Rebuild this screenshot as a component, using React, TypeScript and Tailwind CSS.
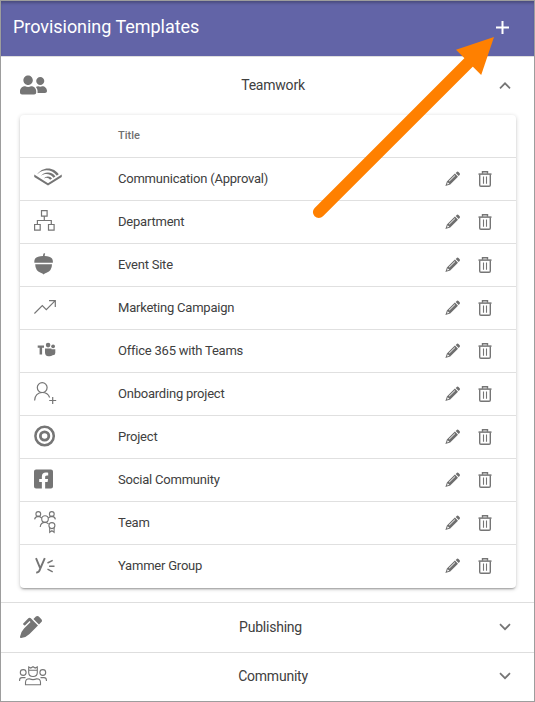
import type { ReactNode } from 'react';
import { FaAudible, FaFacebookSquare, FaPenAlt, FaUserFriends } from 'react-icons/fa';

function Glyph({ children }: { children: ReactNode }) {
  return (
    <svg width="28" height="24" viewBox="0 0 28 24" fill="none" stroke="#757575" strokeWidth="1.2">
      {children}
    </svg>
  );
}

const departmentIcon = (
  <Glyph>
    <path d="M7.5 .6h5.6v5.6H7.5zM.6 14.5h5.6v5.6H.6zM14.5 14.5h5.6v5.6h-5.6zM10.3 6.2v4.500M3.400 14.500v-4h13.900v4" />
  </Glyph>
);

const acornIcon = (
  <Glyph>
    <path
      d="M9 3Q9 1 10 0L11.2.8Q10.6 2 10.7 3Q16 3.200 18 5.500Q19.200 7.500 18.800 9.800H.4Q0 7.500 1.200 5.500Q3.200 3.200 9 3ZM1.200 11.200H18Q18 17.500 12.500 19.800Q10.500 20.600 9.600 21.400Q8.700 20.600 6.700 19.800Q1.200 17.500 1.200 11.200Z"
      fill="#757575"
      stroke="none"
    />
  </Glyph>
);

const campaignIcon = (
  <Glyph>
    <path d="M.4 17.500 8.300 9.600 12.300 13.600 21.200 4.700M15 4.600H21.300V11" />
  </Glyph>
);

const teamsIcon = (
  <Glyph>
    <g fill="#757575" stroke="none">
      <path d="M3.700 6.400H10V8.700H8.100V15.500H5.600V8.700H3.700ZM11 9.500H17.500V10.300H21.300V14Q21.300 16.300 18.500 16.200Q17 17.500 14.500 17.200Q11 17 11 13.500Z" />
      <circle cx="14.100" cy="6.100" r="2.300" />
      <circle cx="19.100" cy="7.300" r="1.900" />
    </g>
  </Glyph>
);

const onboardingIcon = (
  <Glyph>
    <circle cx="8.200" cy="5.600" r="4.900" />
    <path d="M.6 18.500C.6 13.500 4 10.500 8.200 10.500C12 10.500 14.600 12.500 15.600 15.500M18.700 15V22M15.200 18.500H22.200" />
  </Glyph>
);

const projectIcon = (
  <Glyph>
    <circle cx="10.600" cy="11" r="9.200" strokeWidth="2.500" />
    <circle cx="10.600" cy="11" r="4.200" strokeWidth="2.800" />
  </Glyph>
);

const teamIcon = (
  <Glyph>
    <g strokeWidth="1.100">
      <circle cx="4.300" cy="3" r="2.400" />
      <circle cx="17.800" cy="3" r="2.400" />
      <circle cx="11" cy="8" r="3.300" />
      <path d="M.6 8.300Q1 5.500 4.300 5.400Q6.400 5.500 7.800 7.100M14.200 7.100Q15.600 5.500 17.800 5.400Q21 5.500 21.400 8.300M6.200 16Q6.800 11.400 11 11.400Q13 11.400 14.500 12.800" />
      <circle cx="17.900" cy="14.600" r="3" />
      <path d="M15.700 16.700V21.300L17.900 19.600L20.100 21.300V16.700" />
    </g>
  </Glyph>
);

const yammerIcon = (
  <Glyph>
    <path d="M2 4.200 6.300 14.500 10.800 4.200M6.300 14.500Q5 19 2.200 18.400" strokeWidth="1.900" />
    <path d="M13.500 9 18.700 6.400M15.100 12.200H20.500M13.500 15.200 18.700 17.800" strokeWidth="1.500" />
  </Glyph>
);

const templates: { title: string; icon: ReactNode }[] = [
  { title: 'Communication (Approval)', icon: <FaAudible className="mb-1 h-[22px] w-7" /> },
  { title: 'Department', icon: departmentIcon },
  { title: 'Event Site', icon: acornIcon },
  { title: 'Marketing Campaign', icon: campaignIcon },
  { title: 'Office 365 with Teams', icon: teamsIcon },
  { title: 'Onboarding project', icon: onboardingIcon },
  { title: 'Project', icon: projectIcon },
  { title: 'Social Community', icon: <FaFacebookSquare className="mb-[2px] h-[22px] w-[19px]" /> },
  { title: 'Team', icon: teamIcon },
  { title: 'Yammer Group', icon: yammerIcon },
];

function PencilIcon() {
  return (
    <svg width="16" height="16" viewBox="0 0 16 16" fill="#6e6e6e">
      <path d="M10.700 1.900 12 .8Q12.800.3 13.500 1L14.700 2.300Q15.300 3 14.800 3.700L13.700 4.900Z" />
      <path
        fillRule="evenodd"
        d="M9.900 2.600 13 5.700 5.200 13.500 .4 14.900 1.900 10.400ZM2.700 11.200 2 13.400 4.300 12.700ZM9.700 4.300 3.900 10.100 4.400 10.600 10.200 4.800Z"
      />
    </svg>
  );
}

function TrashIcon() {
  return (
    <svg width="14" height="16" viewBox="0 0 14 16" fill="none" stroke="#757575">
      <path d="M.5 3.100H13.500" strokeWidth="1.500" />
      <path d="M4.500 2.800V.8H9.500V2.800M1.700 3.400V14.100Q1.700 15.300 2.900 15.300H11.100Q12.300 15.300 12.300 14.100V3.400" strokeWidth="1.400" />
      <path d="M5.500 5.500V12.800M8.500 5.500V12.800" strokeWidth="1.100" />
    </svg>
  );
}

function Chevron({ up = false }: { up?: boolean }) {
  return (
    <svg width="12" height="8" viewBox="0 0 12 8" fill="none" stroke="#757575" strokeWidth="1.700">
      <path d={up ? 'M1 7.300 6 2.300 11 7.300' : 'M1 1.200 6 6.200 11 1.200'} />
    </svg>
  );
}

function CommunityIcon() {
  return (
    <svg width="28" height="20" viewBox="0 0 28 20" fill="none" stroke="#757575" strokeWidth="1.100">
      <path d="M9.700.9 11.800 2 14 .7 16.200 2 18.300.9V6.500Q18.300 10.500 14 10.500Q9.700 10.500 9.700 6.500ZM9.700 4.300H18.300M6.500 18.800V16.500Q6.500 12.800 10.300 12.800Q14 14.500 17.700 12.800Q21.500 12.800 21.500 16.500V18.800Z" />
      <circle cx="4.200" cy="6.500" r="2.900" />
      <circle cx="23.800" cy="6.500" r="2.900" />
      <path d="M.6 15V14Q.6 11.600 3 11.600H6.500M27.400 15V14Q27.400 11.600 25 11.600H21.500" />
    </svg>
  );
}

function Section({ icon, title, up, className }: { icon: ReactNode; title: string; up?: boolean; className: string }) {
  return (
    <div className={`flex items-center pl-[18px] pr-[23px] ${className}`}>
      <div className="flex text-[#757575]">{icon}</div>
      <div className="flex-1 text-center text-sm leading-5 tracking-[-0.22px] text-[#404040]">{title}</div>
      <Chevron up={up} />
    </div>
  );
}

export default function App() {
  return (
    <div className="relative h-[702px] w-[535px] overflow-hidden border border-[#9d9d9d] bg-white font-[Roboto,sans-serif]">
      <header className="flex h-[55px] items-center justify-between bg-[#6264a7] pb-[4px] pl-3 pr-[25px] shadow-[inset_0_3px_3px_-1px_rgba(0,0,0,0.25)]">
        <h1 className="text-lg font-normal tracking-[-0.04px] text-white">Provisioning Templates</h1>
        <svg className="mt-px" width="13" height="13" viewBox="0 0 13 13" stroke="white" strokeWidth="2">
          <path d="M6.500 0V13M0 6.500H13" />
        </svg>
      </header>
      <Section
        icon={<FaUserFriends className="ml-px h-[22px] w-[27px]" />}
        title="Teamwork"
        up
        className="h-[59px] border-t border-[#dedede] pb-[2px]"
      />
      <div className="ml-[19px] h-[473px] w-[496px] rounded-[4px] shadow-[0_1px_4px_rgba(0,0,0,0.2),0_2px_2px_-1px_rgba(0,0,0,0.3)]">
        <div className="flex h-[43px] items-center border-b border-[#e0e0e0] pl-[98px] text-[11px] font-medium text-[#707070]">
          Title
        </div>
        {templates.map(({ title, icon }) => (
          <div key={title} className="flex h-[43px] items-center border-b border-[#e0e0e0] pl-[14px] pr-6 last:border-b-transparent">
            <div className="flex w-[84px] text-[#757575]">{icon}</div>
            <div className="flex-1 text-[13px] tracking-[-0.22px] text-[#404040]">{title}</div>
            <div className="flex items-center gap-[17px]">
              <PencilIcon />
              <TrashIcon />
            </div>
          </div>
        ))}
      </div>
      <Section
        icon={<FaPenAlt className="ml-px h-[22px] w-[22px]" />}
        title="Publishing"
        className="mt-[14px] h-[50px] border-t border-[#dedede] pb-[2px]"
      />
      <Section
        icon={<CommunityIcon />}
        title="Community"
        className="h-[48px] border-t border-[#dedede] pb-[2px]"
      />
      <svg className="absolute left-[311px] top-[35px]" width="184" height="184" viewBox="312 36 184 184">
        <path d="M318.800 212.100 470 61" stroke="#ff8000" strokeWidth="11.800" strokeLinecap="round" />
        <path d="M494 37 456 49.700 481.200 75Z" fill="#ff8000" />
      </svg>
    </div>
  );
}
